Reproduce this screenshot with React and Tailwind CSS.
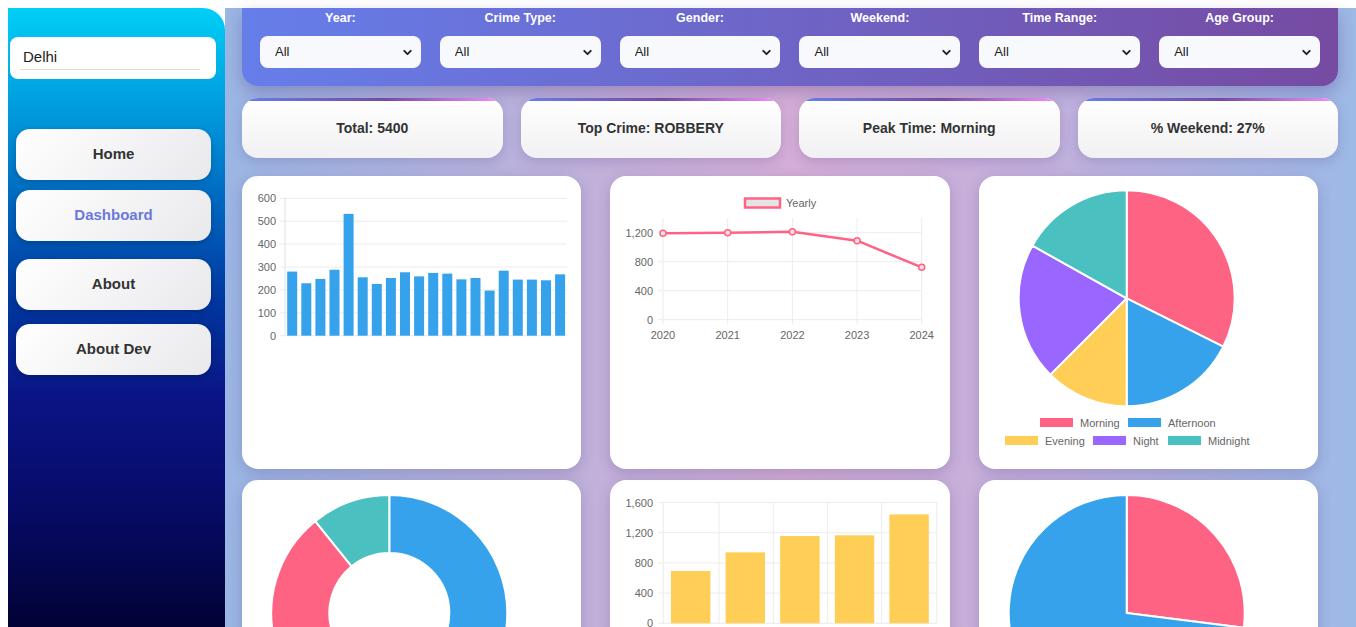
import { ChevronDown } from "lucide-react";

const font = "'Liberation Sans', Arial, sans-serif";

const filters = ["Year:", "Crime Type:", "Gender:", "Weekend:", "Time Range:", "Age Group:"];
const stats = ["Total: 5400", "Top Crime: ROBBERY", "Peak Time: Morning", "% Weekend: 27%"];

const monthly = [280, 229, 248, 288, 532, 255, 226, 252, 277, 259, 274, 271, 246, 252, 197, 284, 245, 245, 242, 268];
const yearly = [1192, 1200, 1212, 1090, 722];
const ageBars = [693, 940, 1156, 1165, 1443];

const timeSlices = [
  { label: "Morning", value: 32.4, color: "#ff6384" },
  { label: "Afternoon", value: 17.6, color: "#36a2eb" },
  { label: "Evening", value: 12.5, color: "#ffce56" },
  { label: "Night", value: 20.6, color: "#9966ff" },
  { label: "Midnight", value: 16.9, color: "#4bc0c0" },
];

// angles in degrees, 0 = top, clockwise
function pt(cx, cy, r, a) {
  const rad = (a * Math.PI) / 180;
  return [cx + r * Math.sin(rad), cy - r * Math.cos(rad)];
}

function slicePath(cx, cy, r, a0, a1, inner = 0) {
  const large = a1 - a0 > 180 ? 1 : 0;
  const [x0, y0] = pt(cx, cy, r, a0);
  const [x1, y1] = pt(cx, cy, r, a1);
  if (!inner) {
    return `M${cx},${cy} L${x0},${y0} A${r},${r} 0 ${large} 1 ${x1},${y1} Z`;
  }
  const [ix0, iy0] = pt(cx, cy, inner, a0);
  const [ix1, iy1] = pt(cx, cy, inner, a1);
  return `M${x0},${y0} A${r},${r} 0 ${large} 1 ${x1},${y1} L${ix1},${iy1} A${inner},${inner} 0 ${large} 0 ${ix0},${iy0} Z`;
}

function Pie({ cx, cy, r, slices, inner = 0 }) {
  const total = slices.reduce((s, d) => s + d.value, 0);
  let a = 0;
  return slices.map((d) => {
    const a0 = a;
    a += (d.value / total) * 360;
    return (
      <path key={d.label} d={slicePath(cx, cy, r, a0, a, inner)} fill={d.color} stroke="#fff" strokeWidth="2" strokeLinejoin="round" />
    );
  });
}

function Card({ children }) {
  return (
    <div className="h-[293px] rounded-2xl bg-white shadow-[0_4px_14px_rgba(60,40,120,0.22)] overflow-hidden">
      <svg width="339" height="293" viewBox="0 0 339 293" style={{ fontFamily: font }}>
        {children}
      </svg>
    </div>
  );
}

function MonthlyBars() {
  const left = 43, right = 325, zero = 159.7, scale = 137.4 / 600;
  const step = (right - left) / monthly.length;
  return (
    <Card>
      {[0, 100, 200, 300, 400, 500, 600].map((t) => {
        const y = zero - t * scale;
        return (
          <g key={t}>
            <line x1={left - 5} x2={right} y1={y} y2={y} stroke="#ececec" />
            <text x={34} y={y + 4} fontSize="11" fill="#666" textAnchor="end">{t}</text>
          </g>
        );
      })}
      <line x1={left} x2={left} y1={22} y2={zero} stroke="#e2e2e2" />
      {monthly.map((v, i) => {
        const h = v * scale;
        return <rect key={i} x={left + i * step + 2.2} y={zero - h} width={10} height={h} fill="#36a2eb" />;
      })}
    </Card>
  );
}

function YearlyLine() {
  const xs = [53, 117.7, 182.4, 247.1, 311.7];
  const zero = 143.7, scale = 29 / 400;
  const pts = yearly.map((v, i) => [xs[i], zero - v * scale]);
  return (
    <Card>
      <rect x="135" y="22.5" width="35" height="9" fill="#e4e4e4" stroke="#ff6384" strokeWidth="2.5" />
      <text x="176" y="31" fontSize="11" fill="#666">Yearly</text>
      {xs.map((x) => (
        <line key={x} x1={x} x2={x} y1={42} y2={zero + 5} stroke="#ececec" />
      ))}
      {[0, 400, 800, 1200].map((t) => {
        const y = zero - t * scale;
        return (
          <g key={t}>
            <line x1={48} x2={311.7} y1={y} y2={y} stroke="#ececec" />
            <text x={43} y={y + 4} fontSize="11" fill="#666" textAnchor="end">{t.toLocaleString("en-US")}</text>
          </g>
        );
      })}
      {["2020", "2021", "2022", "2023", "2024"].map((l, i) => (
        <text key={l} x={xs[i]} y={163} fontSize="11" fill="#666" textAnchor="middle">{l}</text>
      ))}
      <polyline points={pts.map((p) => p.join(",")).join(" ")} fill="none" stroke="#ff6384" strokeWidth="2.5" strokeLinejoin="round" />
      {pts.map(([x, y]) => (
        <circle key={x} cx={x} cy={y} r="3" fill="#ffe0e6" stroke="#ff6384" strokeWidth="1.5" />
      ))}
    </Card>
  );
}

function TimePie() {
  const legend = [
    { i: 0, x: 61, y: 242 },
    { i: 1, x: 149, y: 242 },
    { i: 2, x: 26, y: 260 },
    { i: 3, x: 114, y: 260 },
    { i: 4, x: 189, y: 260 },
  ];
  return (
    <Card>
      <Pie cx={147.7} cy={122.3} r={108} slices={timeSlices} />
      {legend.map(({ i, x, y }) => (
        <g key={i}>
          <rect x={x} y={y} width="33" height="9" fill={timeSlices[i].color} />
          <text x={x + 40} y={y + 8.5} fontSize="11" fill="#666">{timeSlices[i].label}</text>
        </g>
      ))}
    </Card>
  );
}

function GenderDoughnut() {
  const slices = [
    { label: "Male", value: 50, color: "#36a2eb" },
    { label: "Female", value: 39.2, color: "#ff6384" },
    { label: "Other", value: 10.8, color: "#4bc0c0" },
  ];
  return (
    <Card>
      <Pie cx={147.3} cy={133} r={118} inner={60} slices={slices} />
    </Card>
  );
}

function AgeBars() {
  const left = 53.3, zero = 143.3, scale = 30.2 / 400;
  const grid = [53.3, 109, 163.3, 217.7, 271.7, 326.7];
  return (
    <Card>
      {grid.map((x) => (
        <line key={x} x1={x} x2={x} y1={22.5} y2={zero} stroke="#ececec" />
      ))}
      {[0, 400, 800, 1200, 1600].map((t) => {
        const y = zero - t * scale;
        return (
          <g key={t}>
            <line x1={left - 5} x2={326.7} y1={y} y2={y} stroke="#ececec" />
            <text x={43} y={y + 4} fontSize="11" fill="#666" textAnchor="end">{t.toLocaleString("en-US")}</text>
          </g>
        );
      })}
      {ageBars.map((v, i) => {
        const h = v * scale;
        return <rect key={i} x={61 + i * 54.6} y={zero - h} width={39.4} height={h} fill="#ffce56" />;
      })}
    </Card>
  );
}

function WeekendPie() {
  const slices = [
    { label: "Weekend", value: 27, color: "#ff6384" },
    { label: "Weekday", value: 73, color: "#36a2eb" },
  ];
  return (
    <Card>
      <Pie cx={147.7} cy={133} r={118} slices={slices} />
    </Card>
  );
}

function NavButton({ label, active, className }) {
  return (
    <button
      className={`w-[195px] h-[51px] ml-2 rounded-[14px] bg-[linear-gradient(135deg,#ffffff,#e9e9ec)] shadow-[0_2px_6px_rgba(0,0,0,0.2)] text-[15px] font-bold ${
        active ? "text-[#6b79dc]" : "text-[#333]"
      } ${className}`}
    >
      {label}
    </button>
  );
}

export default function App() {
  return (
    <div className="h-[627px] overflow-hidden bg-white pt-2 pl-2 flex" style={{ fontFamily: font }}>
      {/* Sidebar */}
      <aside className="w-[217px] shrink-0 rounded-tr-[22px] bg-[linear-gradient(180deg,#00cff7_0%,#0096da_18%,#0068c0_31%,#0038a0_47%,#0a1484_63%,#070c6a_79%,#020236_100%)] pt-[29px] flex flex-col">
        <div className="ml-[2px] w-[206px] h-[42px] rounded-lg bg-white px-[10px] flex items-center">
          <input
            defaultValue="Delhi"
            className="w-[180px] border-b border-[#dcdcdc] text-[15px] text-[#222] pl-[3px] pb-[1px] outline-none"
          />
        </div>
        <NavButton label="Home" className="mt-[50px]" />
        <NavButton label="Dashboard" active className="mt-[10px] h-[50px]" />
        <NavButton label="About" className="mt-[18px]" />
        <NavButton label="About Dev" className="mt-[14px]" />
      </aside>

      {/* Main */}
      <main className="flex-1 pl-[17px] bg-[linear-gradient(90deg,#9bb6e4_0%,#b9b2dc_25%,#d4aed6_50%,#c3b0dc_72%,#9db9e6_100%)]">
        {/* Filters */}
        <div className="w-[1096px] h-[78px] rounded-b-2xl bg-[linear-gradient(90deg,#667eea,#764ba2)] shadow-[0_6px_16px_rgba(60,40,120,0.3)] px-[18px] pt-[2px] grid grid-cols-6 gap-x-[19px]">
          {filters.map((f) => (
            <div key={f} className="flex flex-col items-center">
              <label className="h-4 leading-4 text-[12.5px] font-bold text-white">{f}</label>
              <div className="relative w-full mt-[10px]">
                <select className="appearance-none w-full h-8 rounded-lg bg-[#f8f9fc] pl-[15px] text-[13px] text-[#222] outline-none">
                  <option>All</option>
                </select>
                <ChevronDown size={13} strokeWidth={3.5} className="absolute right-[7px] top-[10px] text-[#222] pointer-events-none" />
              </div>
            </div>
          ))}
        </div>

        {/* Summary */}
        <div className="w-[1096px] mt-3 grid grid-cols-4 gap-[18px]">
          {stats.map((s) => (
            <div
              key={s}
              className="h-[60px] rounded-2xl overflow-hidden bg-[linear-gradient(180deg,#ffffff,#f1f1f3)] shadow-[0_4px_12px_rgba(60,40,120,0.18)] flex flex-col"
            >
              <div className="h-[3px] bg-[linear-gradient(90deg,#667eea,#764ba2_55%,#f093fb)]" />
              <div className="flex-1 flex items-center justify-center text-[14px] font-bold text-[#333] pb-[3px]">{s}</div>
            </div>
          ))}
        </div>

        {/* Charts */}
        <div className="w-[1076px] mt-[18px] grid grid-cols-3 gap-x-[29px] gap-y-[11px]">
          <MonthlyBars />
          <YearlyLine />
          <TimePie />
          <GenderDoughnut />
          <AgeBars />
          <WeekendPie />
        </div>
      </main>
    </div>
  );
}
